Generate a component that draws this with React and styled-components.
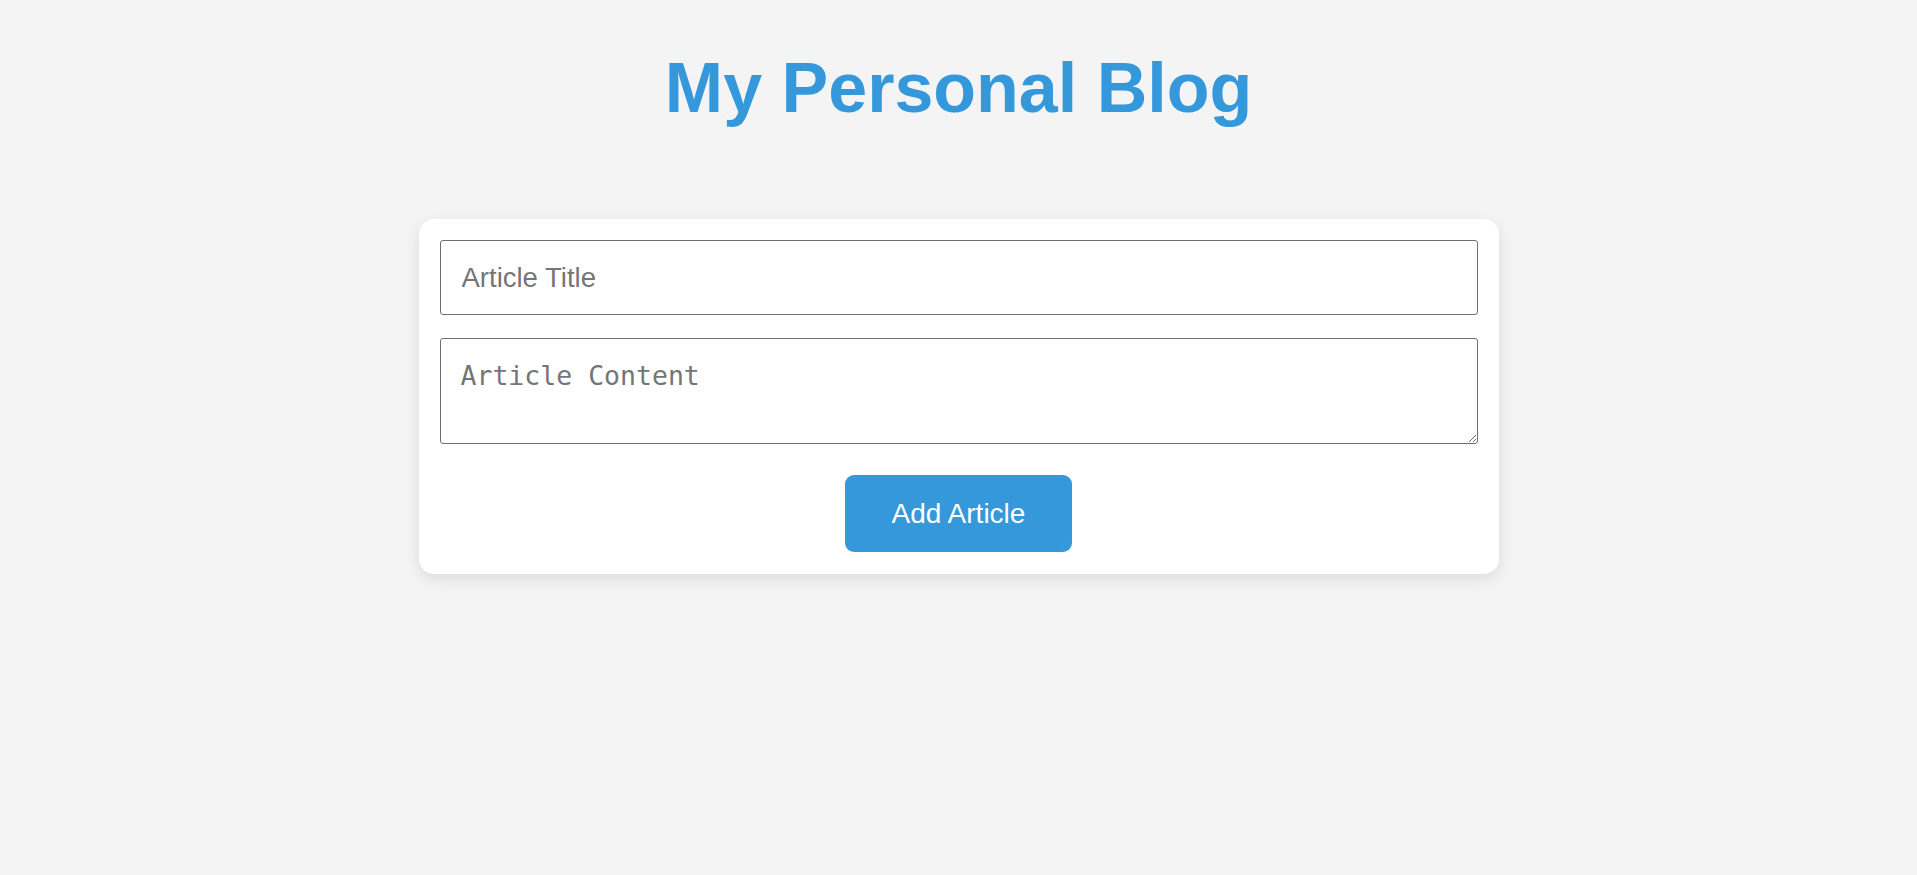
import React, { useState } from "react";
import styled, { createGlobalStyle } from "styled-components";

const GlobalStyle = createGlobalStyle`
  body {
    margin: 0;
    background: #f4f4f4;
    font-family: "Liberation Sans", Arial, sans-serif;
  }
`;

const Page = styled.div`
  display: flex;
  flex-direction: column;
  align-items: center;
  padding-bottom: 40px;
`;

const Title = styled.h1`
  margin: 48px 0 0;
  font-size: 70px;
  font-weight: bold;
  color: #3498db;
  text-align: center;
`;

const FormCard = styled.form`
  box-sizing: border-box;
  width: 1080px;
  margin-top: 91px;
  padding: 21px 21px 22px;
  background: #fff;
  border-radius: 15px;
  box-shadow: 0 5px 15px rgba(0, 0, 0, 0.1);
  display: flex;
  flex-direction: column;
`;

const TitleInput = styled.input`
  box-sizing: border-box;
  width: 100%;
  height: 75px;
  padding: 0 21px;
  border: 1px solid #6f6f6f;
  border-radius: 3px;
  font-family: "Liberation Sans", Arial, sans-serif;
  font-size: 27.5px;
  outline: none;
`;

const ContentArea = styled.textarea`
  box-sizing: border-box;
  display: block;
  width: 100%;
  height: 106px;
  margin-top: 23px;
  padding: 21px 20px;
  border: 1px solid #6f6f6f;
  border-radius: 3px;
  font-family: "DejaVu Sans Mono", monospace;
  font-size: 26.5px;
  outline: none;
`;

const AddButton = styled.button`
  align-self: center;
  height: 77px;
  margin-top: 31px;
  padding: 0 47px;
  border: none;
  border-radius: 9px;
  background: #3498db;
  color: #fff;
  font-family: "Liberation Sans", Arial, sans-serif;
  font-size: 28px;
  cursor: pointer;
`;

export default function App() {
  const [title, setTitle] = useState("");
  const [content, setContent] = useState("");

  const handleSubmit = (e) => {
    e.preventDefault();
    setTitle("");
    setContent("");
  };

  return (
    <>
      <GlobalStyle />
      <Page>
        <Title>My Personal Blog</Title>
        <FormCard onSubmit={handleSubmit}>
          <TitleInput
            placeholder="Article Title"
            value={title}
            onChange={(e) => setTitle(e.target.value)}
          />
          <ContentArea
            placeholder="Article Content"
            value={content}
            onChange={(e) => setContent(e.target.value)}
          />
          <AddButton type="submit">Add Article</AddButton>
        </FormCard>
      </Page>
    </>
  );
}
